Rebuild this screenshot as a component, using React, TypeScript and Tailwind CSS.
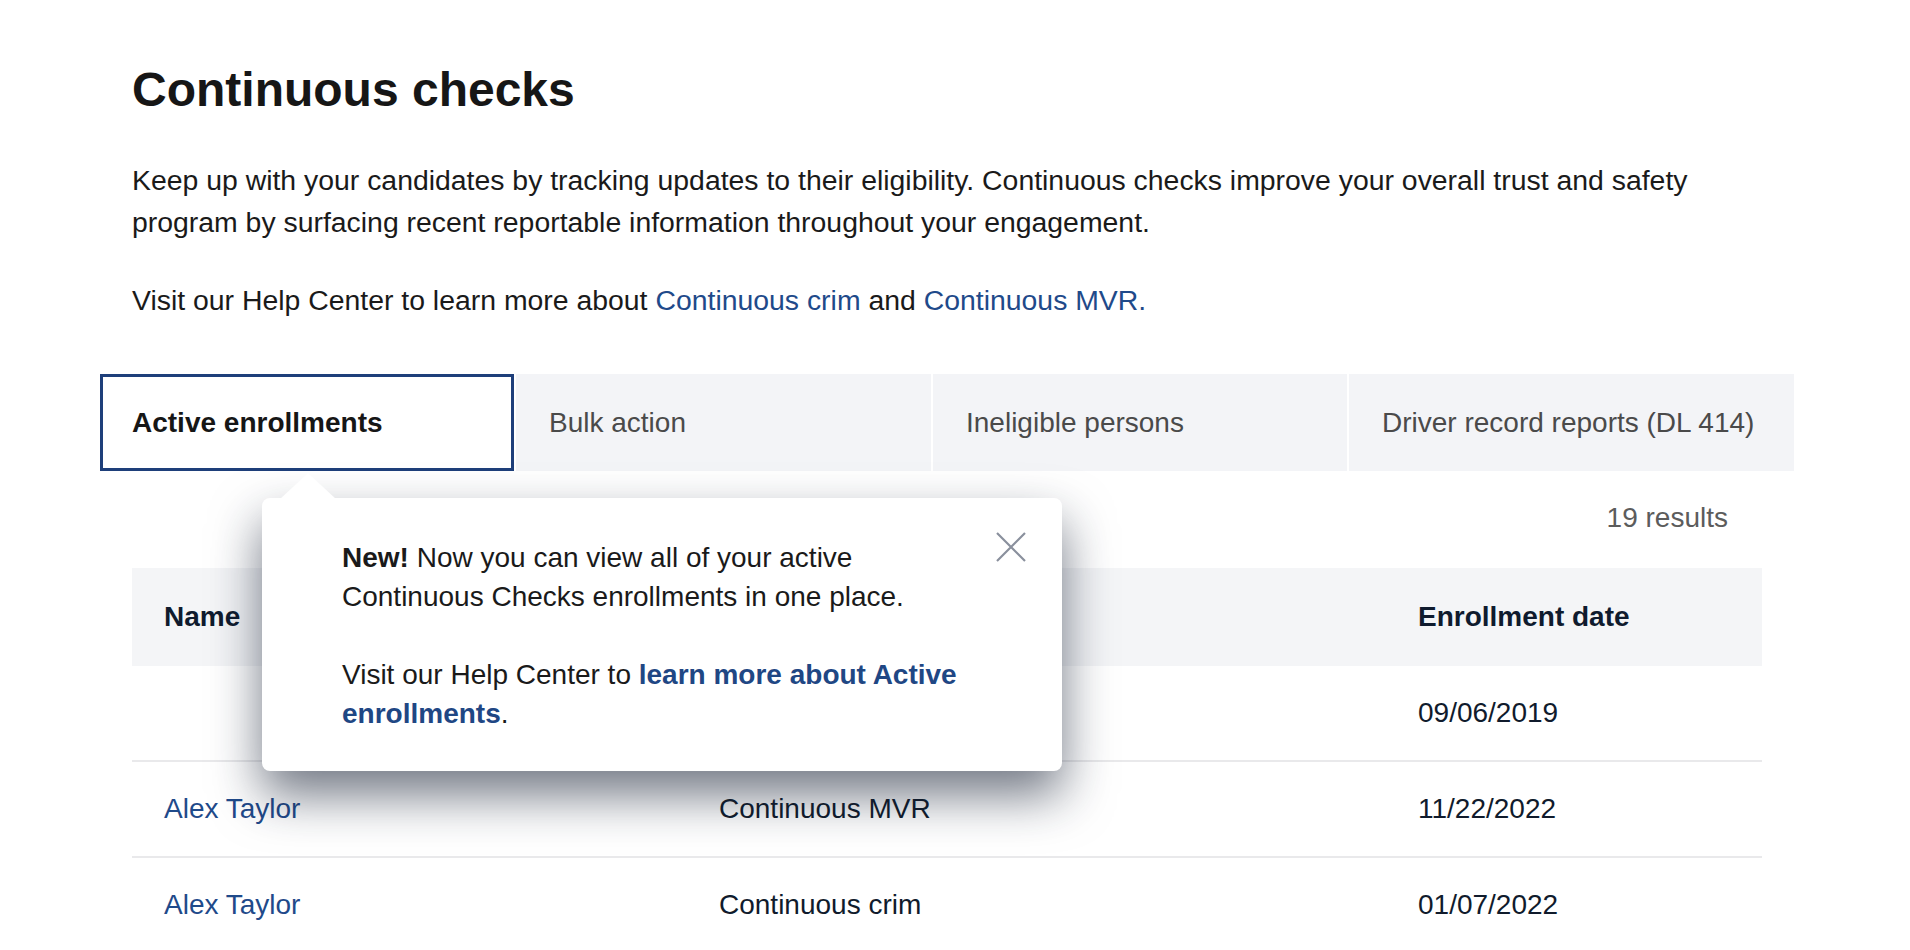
import React from "react";

const tabs = [
  "Active enrollments",
  "Bulk action",
  "Ineligible persons",
  "Driver record reports (DL 414)",
];

const rows = [
  { name: "", type: "Continuous crim", date: "09/06/2019" },
  { name: "Alex Taylor", type: "Continuous MVR", date: "11/22/2022" },
  { name: "Alex Taylor", type: "Continuous crim", date: "01/07/2022" },
  { name: "Alex Taylor", type: "Continuous MVR", date: "03/14/2022" },
];

function Popover() {
  return (
    <div className="absolute left-[159px] top-[121px] z-10 w-[800px] rounded-lg bg-white pt-10 pb-[38px] px-20 text-[28px] font-normal leading-[39px] text-[#1a1a1a] shadow-[0_24px_50px_rgba(20,30,50,0.6)]">
      {/* pointer toward the active tab */}
      <svg
        className="absolute left-[18px] top-[-25px]"
        width="56"
        height="26"
        viewBox="0 0 56 26"
      >
        <polygon points="0,26 28,0 56,26" fill="#ffffff" />
      </svg>
      <button
        aria-label="Close"
        className="absolute right-[35px] top-[34px] text-[#8a909d]"
      >
        <svg width="32" height="30" viewBox="0 0 32 30">
          <path
            d="M2 1 L30 29 M30 1 L2 29"
            stroke="currentColor"
            strokeWidth="2.2"
            fill="none"
          />
        </svg>
      </button>
      <p>
        <span className="font-bold">New!</span> Now you can view all of your
        active Continuous Checks enrollments in one place.
      </p>
      <p className="mt-[39px]">
        Visit our Help Center to{" "}
        <a className="font-bold text-[#1f4784]" href="#">
          learn more about Active enrollments
        </a>
        .
      </p>
    </div>
  );
}

export default function App() {
  return (
    <div className="min-h-screen overflow-hidden bg-white font-['Liberation_Sans',Arial,sans-serif] text-[#1a1a1a]">
      <div className="ml-[100px] w-[1694px]">
        <div className="px-8 pt-[66px]">
          <h1 className="text-[48px] font-bold leading-[48px] text-[#161616]">
            Continuous checks
          </h1>
          <p className="mt-[45px] text-[28.4px] leading-[42px]">
            Keep up with your candidates by tracking updates to their
            eligibility. Continuous checks improve your overall trust and safety
            program by surfacing recent reportable information throughout your
            engagement.
          </p>
          <p className="mt-[36px] text-[28.4px] leading-[42px]">
            Visit our Help Center to learn more about{" "}
            <a className="text-[#1f4a8a]" href="#">
              Continuous crim
            </a>{" "}
            and{" "}
            <a className="text-[#1f4a8a]" href="#">
              Continuous MVR.
            </a>
          </p>
        </div>

        {/* tab strip */}
        <div className="mt-[53px] grid grid-cols-[414px_415px_414px_1fr] gap-[2px]">
          {tabs.map((t, i) =>
            i === 0 ? (
              <div
                key={t}
                className="relative flex h-[97px] items-center border-[3px] border-[#1e3f7a] bg-white pl-[29px] text-[28px] font-bold text-[#161616]"
              >
                {t}
                <Popover />
              </div>
            ) : (
              <div
                key={t}
                className="flex h-[97px] items-center bg-[#f3f4f7] pl-[33px] text-[28px] text-[#4a4a4a]"
              >
                {t}
              </div>
            )
          )}
        </div>

        <div className="px-8">
          <div className="mt-[26px] pr-[34px] text-right text-[28px] leading-[42px] text-[#5c5c5c]">
            19 results
          </div>

          <div className="mt-[29px]">
            <div className="grid h-[98px] grid-cols-[555px_699px_1fr] items-center bg-[#f4f5f7] text-[28px] font-bold text-[#0f1b2e]">
              <div className="pl-8">Name</div>
              <div className="pl-8">Type</div>
              <div className="pl-8">Enrollment date</div>
            </div>
            {rows.map((r, i) => (
              <div
                key={i}
                className="grid h-[96px] grid-cols-[555px_699px_1fr] items-center border-b-2 border-[#e9e9eb] text-[28px] text-[#101b2c]"
              >
                <div className="pl-8">
                  {r.name && (
                    <a className="text-[#1f4a8a]" href="#">
                      {r.name}
                    </a>
                  )}
                </div>
                <div className="pl-8">{r.type}</div>
                <div className="pl-8">{r.date}</div>
              </div>
            ))}
          </div>
        </div>
      </div>
    </div>
  );
}
